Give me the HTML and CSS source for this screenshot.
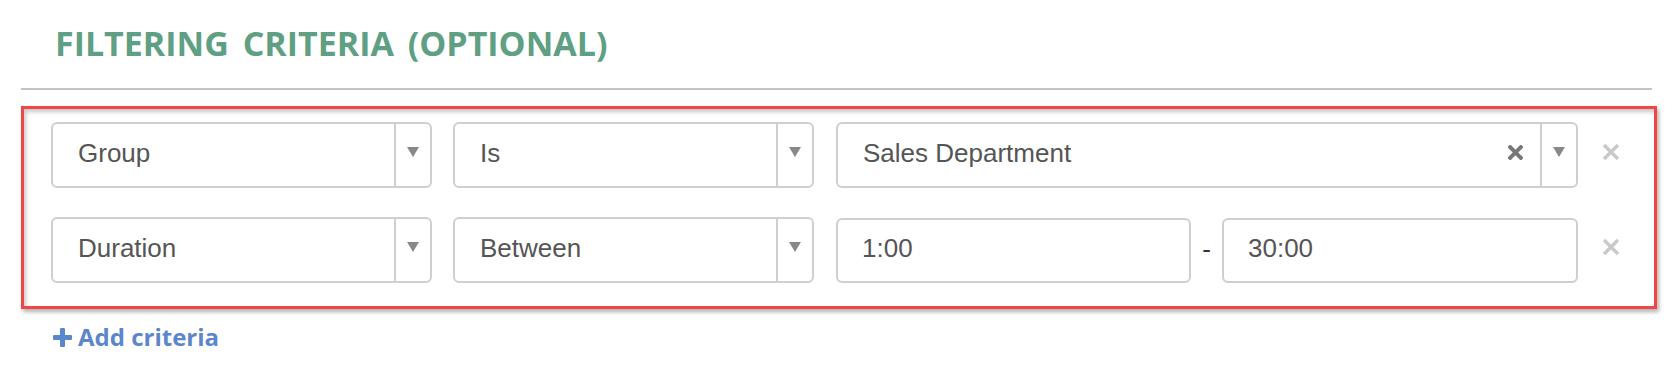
FILE: index.html
```html
<!DOCTYPE html>
<html lang="en">
<head>
<meta charset="utf-8">
<title>Filtering criteria</title>
<link rel="stylesheet" href="styles.css">
</head>
<body>
<div class="page">
  <h2 class="title">FILTERING CRITERIA (OPTIONAL)</h2>
  <hr class="rule">
  <div class="criteria">
    <div class="row">
      <div class="select col-field">
        <div class="value">Group</div>
        <div class="arrow"><span class="tri"></span></div>
      </div>
      <div class="select col-op">
        <div class="value">Is</div>
        <div class="arrow"><span class="tri"></span></div>
      </div>
      <div class="select col-val">
        <div class="value">Sales Department</div>
        <svg class="clear" width="15" height="15" viewBox="0 0 15 15"><path d="M2.2 2.2L12.8 12.8M12.8 2.2L2.2 12.8" stroke="#777" stroke-width="4" stroke-linecap="square"/></svg>
        <div class="arrow"><span class="tri"></span></div>
      </div>
      <svg class="remove" width="18" height="18" viewBox="0 0 18 18"><path d="M2 2L16 16M16 2L2 16" stroke="#c9c9c9" stroke-width="3.4"/></svg>
    </div>
    <div class="row">
      <div class="select col-field">
        <div class="value">Duration</div>
        <div class="arrow"><span class="tri"></span></div>
      </div>
      <div class="select col-op">
        <div class="value">Between</div>
        <div class="arrow"><span class="tri"></span></div>
      </div>
      <div class="range col-val">
        <div class="input">1:00</div>
        <div class="dash">-</div>
        <div class="input">30:00</div>
      </div>
      <svg class="remove" width="18" height="18" viewBox="0 0 18 18"><path d="M2 2L16 16M16 2L2 16" stroke="#c9c9c9" stroke-width="3.4"/></svg>
    </div>
  </div>
  <a class="add" href="#">
    <svg class="plus" width="19" height="19" viewBox="0 0 19 19"><rect x="7" y="0" width="5" height="19" rx="1" fill="#5b86cc"/><rect x="0" y="7" width="19" height="5" rx="1" fill="#5b86cc"/></svg>
    <span>Add criteria</span>
  </a>
</div>
</body>
</html>
```

FILE: styles.css
```css
html, body {
  margin: 0;
  padding: 0;
  background: #ffffff;
}

.page {
  padding: 0 20px 0 21px;
  font-family: "Liberation Sans", Arial, sans-serif;
}

.title {
  margin: 23px 0 0 0;
  padding-left: 34px;
  font-family: "Open Sans", sans-serif;
  font-weight: 700;
  font-size: 34px;
  line-height: 40px;
  color: #5f9f83;
  word-spacing: 5px;
  letter-spacing: 0;
}

.rule {
  margin: 25px 0 0 0;
  border: 0;
  height: 2px;
  background: #c4c4c4;
  width: 1631px;
}

.criteria {
  margin-top: 16px;
  width: 1636px;
  box-sizing: border-box;
  border: 3px solid #f04646;
  padding: 13px 0 23px 27px;
  display: flex;
  flex-direction: column;
  gap: 29px;
  box-shadow: 2px 3px 4px rgba(0, 0, 0, 0.3), inset 2px 3px 4px rgba(0, 0, 0, 0.22);
}

.row {
  display: flex;
  align-items: center;
  height: 66px;
}

.col-field { width: 381px; margin-right: 21px; }
.col-op { width: 361px; margin-right: 22px; }
.col-val { width: 742px; }

.select {
  box-sizing: border-box;
  height: 66px;
  border: 2px solid #cfcfcf;
  border-radius: 6px;
  display: flex;
  align-items: center;
  background: #fff;
}

.value {
  flex: 1;
  padding-left: 25px;
  font-size: 26px;
  color: #555555;
  padding-bottom: 4px;
}

.arrow {
  align-self: stretch;
  width: 34px;
  border-left: 2px solid #cfcfcf;
  display: flex;
  align-items: center;
  justify-content: center;
}

.tri {
  width: 0;
  height: 0;
  border-left: 6px solid transparent;
  border-right: 6px solid transparent;
  border-top: 10px solid #888888;
  margin-bottom: 6px;
}

.clear {
  margin-right: 17px;
  margin-bottom: 6px;
}

.remove {
  margin-left: 24px;
  margin-bottom: 6px;
}

.range {
  display: flex;
  align-items: center;
}

.input {
  box-sizing: border-box;
  width: 355px;
  height: 65px;
  border: 2px solid #cfcfcf;
  border-radius: 6px;
  padding-left: 24px;
  display: flex;
  align-items: center;
  font-size: 26px;
  color: #555555;
  padding-bottom: 4px;
}

.input:last-child {
  width: 356px;
}

.dash {
  width: 31px;
  text-align: center;
  font-size: 26px;
  color: #333333;
  padding-bottom: 2px;
}

.add {
  display: flex;
  align-items: center;
  gap: 6px;
  margin-top: 13px;
  padding-left: 32px;
  font-family: "Open Sans", sans-serif;
  font-weight: 700;
  font-size: 24px;
  line-height: 30px;
  color: #5b86cc;
  text-decoration: none;
}
```
